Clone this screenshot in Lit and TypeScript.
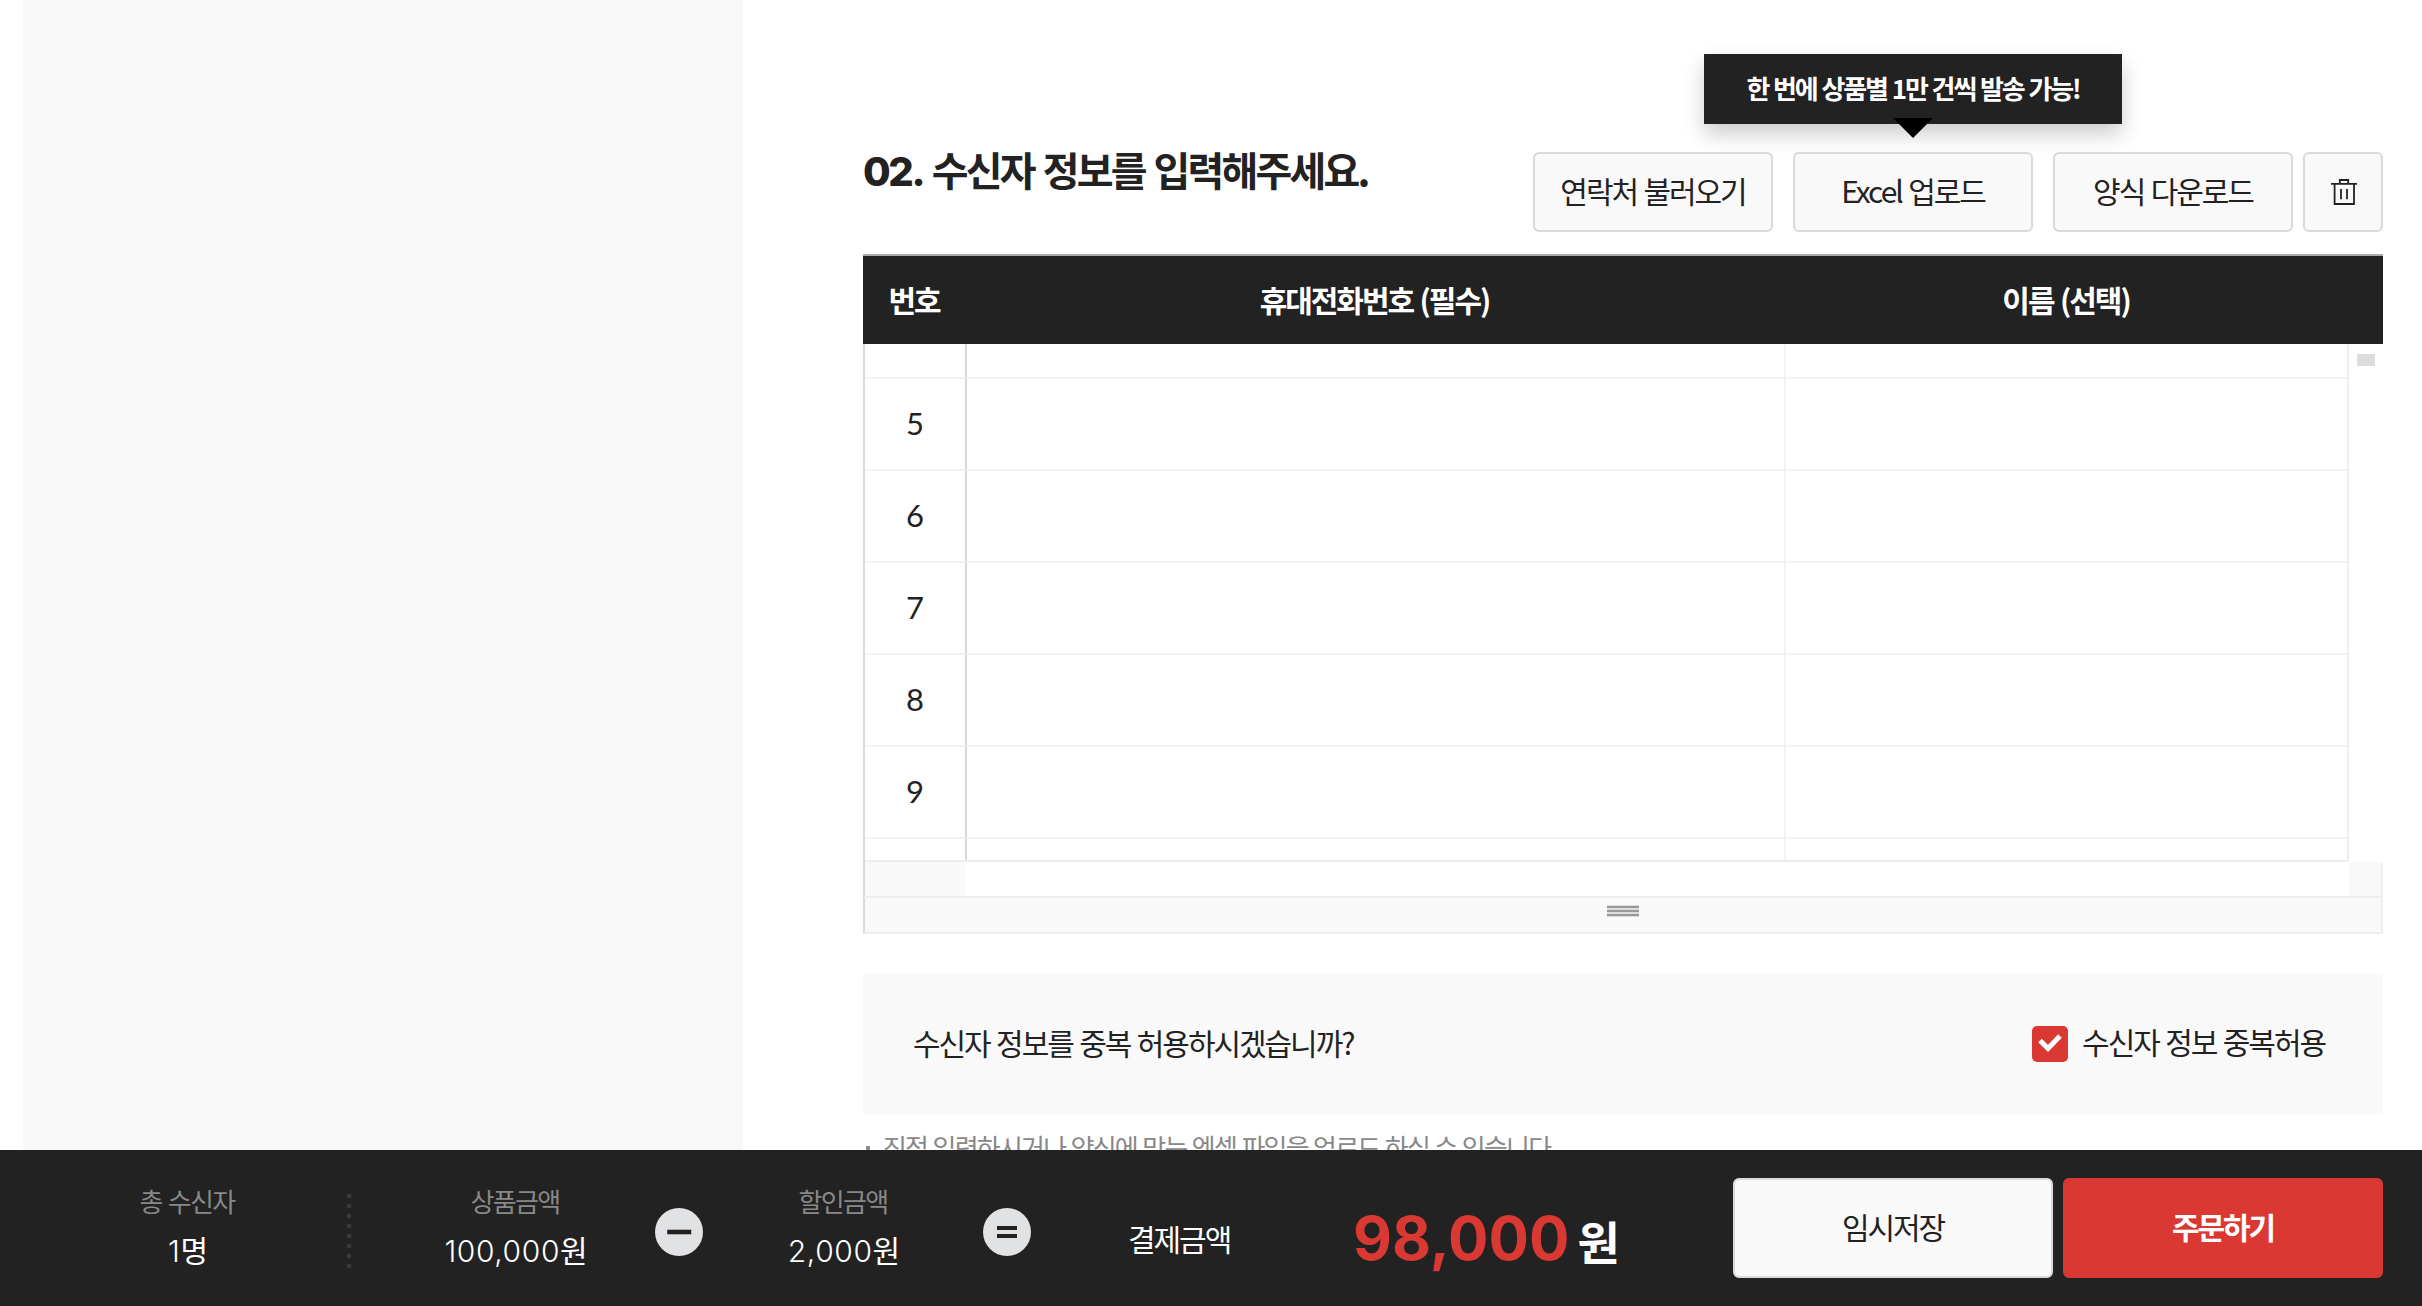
import { LitElement, html, css, svg } from 'lit';
import { customElement, property } from 'lit/decorators.js';

@customElement('op-badge')
export class OpBadge extends LitElement {
    static styles = [
        css`
            :host {
                display: block;
                width: 48px;
                height: 48px;
            }

            svg {
                display: block;
            }
        `
    ];

    @property() kind = 'minus';

    render() {
        return html`
            <svg width="48" height="48" viewBox="0 0 48 48">
                <circle cx="24" cy="24" r="24" fill="#e1e2e4"></circle>
                ${this.kind === 'minus'
                    ? svg`<path d="M12.200 24H36.200" stroke="#222" stroke-width="4.6"></path>`
                    : svg`<path d="M14 20H34M14 28H34" stroke="#222" stroke-width="4.2"></path>`}
            </svg>
        `;
    }
}

@customElement('app-root')
export class AppRoot extends LitElement {
    static styles = [
        css`
            :host {
                display: flex;
                flex-direction: column;
                width: 2422px;
                height: 1306px;
                overflow: hidden;
                background: #fff;
                color: #222;
                font-family: 'Noto Sans CJK KR', sans-serif;
                font-size: 30px;
                letter-spacing: -2.05px;
                word-spacing: 1.8px;
                white-space: nowrap;
            }

            * {
                box-sizing: border-box;
            }

            .page {
                display: flex;
                height: 1150px;
                overflow: hidden;
                padding: 0 39px 0 23px;
            }

            .side {
                width: 720px;
                background: #f8f8f8;
            }

            .content {
                width: 1520px;
                margin-left: 120px;
            }

            .top {
                display: flex;
                height: 254px;
                padding-top: 152px;
            }

            h2 {
                margin: -13px 0 0;
                flex: 1;
                font-size: 40px;
                line-height: 60px;
                font-weight: 700;
                letter-spacing: -2.8px;
                word-spacing: 2.5px;
            }

            .no {
                font-family: Inter, sans-serif;
                font-size: 40px;
                font-weight: 800;
                letter-spacing: -2.4px;
            }

            .btn {
                position: relative;
                display: flex;
                align-items: center;
                justify-content: center;
                width: 240px;
                height: 80px;
                padding-bottom: 4px;
                margin-left: 20px;
                border: 2px solid #dadada;
                border-radius: 6px;
                background: #f9f9f9;
            }

            .btn.trash {
                width: 80px;
                margin-left: 10px;
                padding: 0 0 0 2px;
            }

            .tip {
                position: absolute;
                left: -91px;
                top: -100px;
                width: 418px;
                height: 70px;
                line-height: 67px;
                background: #222;
                color: #fff;
                font-size: 26px;
                font-weight: 700;
                letter-spacing: -2.1px;
                word-spacing: 1px;
                text-align: center;
                box-shadow: 0 10px 20px rgba(0, 0, 0, 0.2);
            }

            .tip::after {
                content: '';
                position: absolute;
                left: 189px;
                top: 64px;
                border: 20px solid transparent;
                border-top-color: #000;
                border-bottom: 0;
            }

            .head {
                display: grid;
                grid-template-columns: 102px 819px 1fr;
                height: 90px;
                line-height: 86px;
                border-top: 2px solid #aaa;
                background: #222;
                color: #fff;
                font-weight: 700;
                text-align: center;
            }

            .head .name {
                padding-right: 35px;
            }

            .grid {
                display: flex;
                height: 518px;
                border-left: 2px solid #dadada;
            }

            .rows {
                width: 1484px;
                height: 518px;
                overflow: hidden;
                border-bottom: 2px solid #eee;
                border-right: 2px solid #eee;
            }

            .row {
                display: grid;
                grid-template-columns: 102px 819px 1fr;
                height: 92px;
                line-height: 88px;
                text-align: center;
            }

            .row:first-child {
                height: 35px;
            }

            .row > div {
                border-bottom: 2px solid #f3f3f3;
            }

            .row .num {
                border-right: 2px solid #d9d9d9;
                border-bottom-color: #f3f3f3;
                letter-spacing: 0;
                font-family: Lato, sans-serif;
                font-size: 31px;
            }

            .row .phone {
                border-right: 2px solid #f3f3f3;
            }

            .scroll {
                width: 18px;
                height: 12px;
                margin: 10px 0 0 8px;
                background: #ddd;
            }

            .hscroll {
                display: flex;
                justify-content: space-between;
                height: 34px;
                border-left: 2px solid #dadada;
                border-right: 2px solid #eee;
            }

            .hscroll i {
                width: 100px;
                background: #f9f9f9;
            }

            .hscroll i:last-child {
                width: 32px;
            }

            .resize {
                display: flex;
                justify-content: center;
                height: 38px;
                padding-top: 7px;
                border: 2px solid #eee;
                border-left-color: #dadada;
                background: #f9f9f9;
            }

            .allow {
                display: flex;
                align-items: center;
                justify-content: space-between;
                height: 140px;
                margin-top: 40px;
                padding: 0 58px 0 50px;
                background: #f9f9f9;
            }

            .question {
                padding-bottom: 4px;
            }

            .check {
                display: flex;
                align-items: center;
            }

            .check span {
                padding-bottom: 6px;
            }

            .check svg {
                margin-right: 14px;
            }

            .note {
                display: flex;
                margin-top: 14px;
                font-size: 26px;
                line-height: 38px;
                letter-spacing: -1.8px;
                word-spacing: 1.3px;
                color: #888;
            }

            .note::before {
                content: '';
                width: 4px;
                height: 4px;
                margin: 18px 13px 0 3px;
                border-radius: 1px;
                background: #888;
            }

            .bar {
                display: flex;
                height: 156px;
                padding: 0 39px 0 23px;
                background: #222;
                color: #fff;
            }

            .cell {
                width: 280px;
                padding-top: 32px;
                text-align: center;
            }

            .cell.people {
                width: 328px;
                margin-right: -4px;
            }

            .cell.price {
                width: 304px;
                padding-left: 24px;
            }

            .label {
                line-height: 38px;
                font-size: 26px;
                letter-spacing: -1.7px;
                color: #888;
            }

            .value {
                line-height: 40px;
                margin-top: 9px;
                font-size: 30px;
            }

            .value b {
                font-family: Inter, sans-serif;
                font-weight: 300;
                font-size: 30px;
                letter-spacing: 0.6px;
            }

            .dots {
                width: 4px;
                height: 74px;
                margin-top: 44px;
                background: repeating-linear-gradient(#3a3a3a 0 4px, transparent 4px 10px);
            }

            op-badge {
                margin-top: 58px;
            }

            .pay {
                width: 322px;
                padding-left: 97px;
                line-height: 176px;
            }

            .total {
                display: flex;
                align-items: baseline;
                line-height: 177px;
                font-weight: 700;
                color: #da3832;
            }

            .total .sum {
                font-family: Inter, sans-serif;
                font-size: 60px;
                letter-spacing: 0;
            }

            .total .won {
                margin-left: 8px;
                color: #fff;
                font-size: 46px;
            }

            .act {
                display: flex;
                align-items: center;
                justify-content: center;
                width: 320px;
                height: 100px;
                margin: 28px 0 0 10px;
                padding-bottom: 5px;
                border: 2px solid #dadada;
                border-radius: 6px;
                background: #f9f9f9;
                color: #222;
            }

            .act.order {
                border-color: #da3832;
                background: #da3832;
                color: #fff;
                font-weight: 700;
            }

            .fill {
                flex: 1;
            }
        `
    ];

    rows = ['', '5', '6', '7', '8', '9', ''];

    render() {
        return html`
            <div class="page">
                <div class="side"></div>
                <div class="content">
                    <div class="top">
                        <h2><span class="no">02.</span> 수신자 정보를 입력해주세요.</h2>
                        <div class="btn">연락처 불러오기</div>
                        <div class="btn">
                            Excel 업로드
                            <div class="tip">한 번에 상품별 1만 건씩 발송 가능!</div>
                        </div>
                        <div class="btn">양식 다운로드</div>
                        <div class="btn trash">
                            <svg width="26" height="26" viewBox="0 0 26 26" fill="none" stroke="#222" stroke-width="1.8">
                                <path d="M0 4.800H26M8.800 4.800V1H17.200V4.800M3.600 4.800V25H23V4.800M10 10V20.300M16 10V20.300"></path>
                            </svg>
                        </div>
                    </div>
                    <div class="head">
                        <div>번호</div>
                        <div>휴대전화번호 (필수)</div>
                        <div class="name">이름 (선택)</div>
                    </div>
                    <div class="grid">
                        <div class="rows">
                            ${this.rows.map(
                                (n) => html`
                                    <div class="row">
                                        <div class="num">${n}</div>
                                        <div class="phone"></div>
                                        <div></div>
                                    </div>
                                `
                            )}
                        </div>
                        <div class="scroll"></div>
                    </div>
                    <div class="hscroll"><i></i><i></i></div>
                    <div class="resize">
                        <svg width="32" height="12" viewBox="0 0 32 12">
                            <path d="M0 0H32V12H0Z" fill="#ddd"></path>
                            <path d="M0 2H32M0 6H32M0 10H32" stroke="#999" stroke-width="2"></path>
                        </svg>
                    </div>
                    <div class="allow">
                        <div class="question">수신자 정보를 중복 허용하시겠습니까?</div>
                        <div class="check">
                            <svg width="36" height="36" viewBox="0 0 36 36">
                                <rect width="36" height="36" rx="5" fill="#da3832"></rect>
                                <path d="M8 14.500L16 22.500L28 10" fill="none" stroke="#fff" stroke-width="5"></path>
                            </svg>
                            <span>수신자 정보 중복허용</span>
                        </div>
                    </div>
                    <div class="note">직접 입력하시거나 양식에 맞는 엑셀 파일을 업로드 하실 수 있습니다.</div>
                </div>
            </div>
            <div class="bar">
                <div class="cell people">
                    <div class="label">총 수신자</div>
                    <div class="value"><b>1</b>명</div>
                </div>
                <div class="dots"></div>
                <div class="cell price">
                    <div class="label">상품금액</div>
                    <div class="value"><b>100,000</b>원</div>
                </div>
                <op-badge></op-badge>
                <div class="cell">
                    <div class="label">할인금액</div>
                    <div class="value"><b>2,000</b>원</div>
                </div>
                <op-badge kind="equals"></op-badge>
                <div class="pay">결제금액</div>
                <div class="total"><span class="sum">98,000</span><span class="won">원</span></div>
                <div class="fill"></div>
                <div class="act">임시저장</div>
                <div class="act order">주문하기</div>
            </div>
        `;
    }
}
